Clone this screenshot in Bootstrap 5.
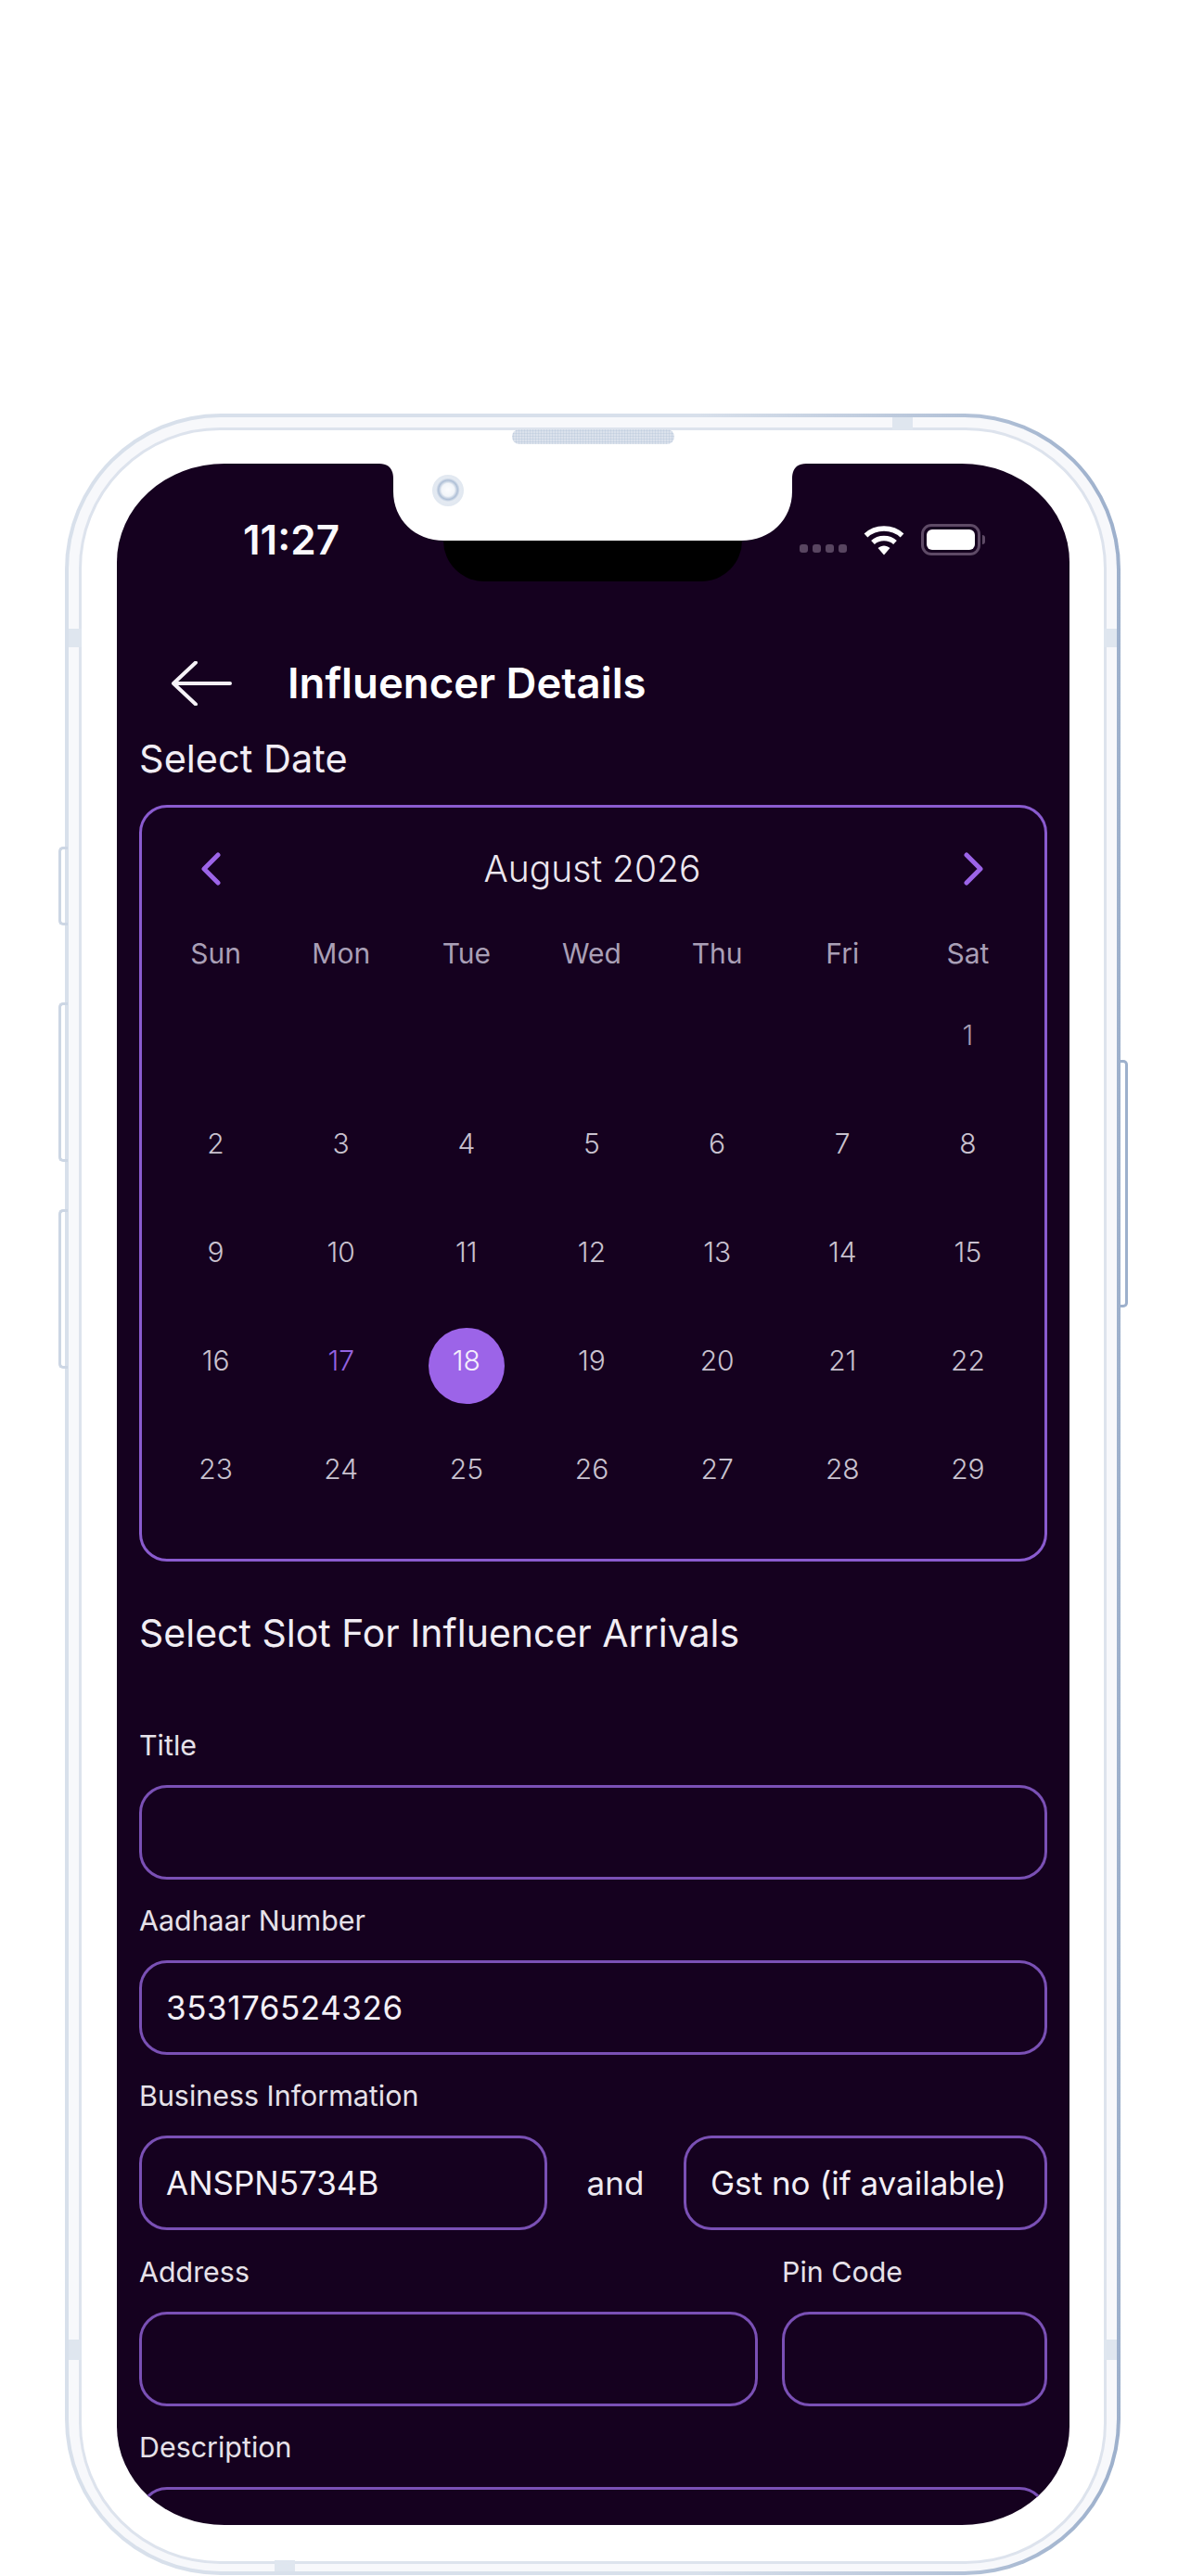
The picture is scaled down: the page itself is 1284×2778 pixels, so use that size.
<!DOCTYPE html>
<html lang="en">
<head>
<meta charset="utf-8">
<title>Influencer Details</title>
<link href="https://cdn.jsdelivr.net/npm/bootstrap@5.3.0/dist/css/bootstrap.min.css" rel="stylesheet">
<style>
html,body{background:#fff;height:2778px;overflow:hidden;font-family:"Inter","Liberation Sans",sans-serif}
.phone-wrap{position:relative;width:1138px;height:2331px;margin:446px 0 0 70px}
.shell-edge{height:100%;padding:4px;border-radius:168px;background:linear-gradient(to right,#d8e0eb 0,#d8e0eb 60%,#9db0cc 100%)}
.shell-band{height:100%;padding:11px 11px 8px;border-radius:164px;background:#f7f8fb}
.shell-ring{height:100%;padding:36px 37px 38px 38px;border:3px solid #dde3ed;border-radius:152px;background:#fff}
.app-screen{position:relative;height:2223px;padding:0 24px;overflow:hidden;background:#15011f;border-radius:116px/106px;color:#f3eff6}
.status-row{height:164px;padding:0 72px 0 112px}
.clock{font-size:44px;font-weight:600;color:#fbf9fc}
.sig-dot{width:9px;height:9px;border-radius:3px;background:#584560}
.sig-dots{margin-top:18px;margin-right:18px;gap:5px}
.batt{position:relative;width:64px;height:34px;padding:3px;border:3px solid #5e4a66;border-radius:11px;margin-left:18px}
.batt::before{content:"";display:block;height:100%;background:#fff;border-radius:6px}
.batt::after{content:"";position:absolute;right:-8px;top:9px;width:3px;height:10px;background:#5e4a66;border-radius:0 3px 3px 0}
.head-row{height:90px;margin-top:28px;padding-left:34px}
.head-title{font-size:45.500px;font-weight:600;margin:0 0 0 60px;color:#fff}
.sect-title{font-size:41px;font-weight:400;line-height:50px;margin:0;color:#f1edf4}
.date-title{margin-top:11px;font-size:41.5px}
.cal-box{margin-top:25px;height:816px;padding:36px 15px 0 12px;border:3px solid #8a5bcf;border-radius:30px}
.cal-nav{height:60px;padding:0 49px 0 50px}
.cal-month{font-size:39px;font-weight:300;color:#ece7ef}
.cal-week{margin-top:36px;height:50px;font-size:30px;font-weight:400;color:#a99fb6}
.cal-week .col,.cal-days .col{display:flex;align-items:center;justify-content:center}
.cal-days{margin-top:4.5px}
.cal-days .col{height:117px;font-size:30px;font-weight:300;color:#c9c2cf}
.cal-days .col span{display:flex;align-items:center;justify-content:center;width:82px;height:82px;margin-top:12px;padding-bottom:12px}
.day-muted{color:#a79eb2}
.cal-days .col .day-today{color:#9463e0}
.cal-days .col .day-picked{border-radius:50%;background:#9c64e8;color:#f5effc}
.slot-title{margin-top:51.5px}
.field-label{display:block;height:40px;margin:0;font-size:30.4px;line-height:40px;font-weight:400;color:#e6e1e9}
.field-first{margin-top:76px}
.field-next{margin-top:24.4px}
.form-control.field-box{height:102px;margin-top:23px;padding:0 26px;display:flex;align-items:center;background:transparent;border:3px solid #7a50b5;border-radius:30px;color:#f3eff6;font-size:35px;font-family:inherit}
.digits-wide{letter-spacing:.55px}
.biz-left{width:440px}
.biz-and{width:147px;margin-top:23px;font-size:35px;color:#ece8ef}
.biz-right{width:392px}
.pin-col{width:286px;margin-left:26px}
.side-key{position:absolute;width:10px;border:3px solid #ccd6e4;border-right:0;border-radius:5px 0 0 5px}
.key-a{left:-7px;top:467px;height:85px}
.key-b{left:-7px;top:635px;height:172px}
.key-c{left:-7px;top:858px;height:172px}
.key-d{left:1135px;top:697px;height:267px;width:11px;border:3px solid #9db0cc;border-left:0;border-radius:0 5px 5px 0}
.ant{position:absolute;background:#dfe6ef}
.ant-l1{left:4px;top:232px;width:14px;height:20px}
.ant-l2{left:4px;top:2077px;width:14px;height:22px}
.ant-r1{left:1120px;top:232px;width:14px;height:20px}
.ant-r2{left:1120px;top:2077px;width:14px;height:22px}
.ant-t{left:892px;top:4px;width:22px;height:14px}
.ant-b{left:226px;top:2315px;width:22px;height:12px}
.speaker{position:absolute;left:482px;top:17px;width:175px;height:16px;border-radius:8px;background:radial-gradient(circle,#c3cfe0 45%,#dbe2ec 50%) 0 0/3px 3px}
.cam{position:absolute;left:396px;top:66px;width:34px;height:34px;border-radius:50%;background:radial-gradient(circle at 50% 48%,#fbfcfe 0,#f2f5f9 28%,#aebfd6 42%,#e4eaf2 52%,#dfe6ef 80%,#f4f6fa 100%)}
.notch-dark{position:absolute;left:352px;top:83px;width:322px;height:44px;background:#000;border-radius:0 0 46px 46px}
.notch-cut{position:absolute;left:283px;top:0}
</style>
</head>
<body>
<div class="phone-wrap">
  <div class="shell-edge"><div class="shell-band"><div class="shell-ring">
    <div class="app-screen">
      <div class="status-row d-flex align-items-center justify-content-between">
        <span class="clock">11:27</span>
        <div class="d-flex align-items-center">
          <div class="d-flex sig-dots"><i class="sig-dot"></i><i class="sig-dot"></i><i class="sig-dot"></i><i class="sig-dot"></i></div>
          <svg width="44" height="33" viewBox="0 0 44 33" aria-hidden="true"><path d="M2.5 11.5C13 1.5 31 1.5 41.5 11.5" fill="none" stroke="#fff" stroke-width="5.5"/><path d="M10 19C16.5 13 27.5 13 34 19" fill="none" stroke="#fff" stroke-width="5.5"/><path d="M15.5 25C19.500 21.500 24.500 21.500 28.500 25L22 32.500Z" fill="#fff"/></svg>
          <div class="batt"></div>
        </div>
      </div>
      <div class="head-row d-flex align-items-center">
        <svg width="66" height="48" viewBox="0 0 66 48" aria-hidden="true"><path d="M64 24H3M27 1.500L3 24L27 46.500" fill="none" stroke="#f6f3f8" stroke-width="4" stroke-linecap="round" stroke-linejoin="round"/></svg>
        <h1 class="head-title">Influencer Details</h1>
      </div>
      <h2 class="sect-title date-title">Select Date</h2>
      <div class="cal-box">
        <div class="cal-nav d-flex align-items-center justify-content-between">
          <svg width="24" height="36" viewBox="0 0 24 36" aria-hidden="true"><path d="M20 3L5 18L20 33" fill="none" stroke="#9c64e8" stroke-width="5" stroke-linecap="round" stroke-linejoin="round"/></svg>
          <span class="cal-month">August 2026</span>
          <svg width="24" height="36" viewBox="0 0 24 36" aria-hidden="true"><path d="M4 3L19 18L4 33" fill="none" stroke="#9c64e8" stroke-width="5" stroke-linecap="round" stroke-linejoin="round"/></svg>
        </div>
        <div class="row g-0 cal-week"><div class="col">Sun</div><div class="col">Mon</div><div class="col">Tue</div><div class="col">Wed</div><div class="col">Thu</div><div class="col">Fri</div><div class="col">Sat</div></div>
        <div class="cal-days">
          <div class="row g-0"><div class="col"></div><div class="col"></div><div class="col"></div><div class="col"></div><div class="col"></div><div class="col"></div><div class="col"><span class="day-muted">1</span></div></div>
          <div class="row g-0"><div class="col"><span>2</span></div><div class="col"><span>3</span></div><div class="col"><span>4</span></div><div class="col"><span>5</span></div><div class="col"><span>6</span></div><div class="col"><span>7</span></div><div class="col"><span>8</span></div></div>
          <div class="row g-0"><div class="col"><span>9</span></div><div class="col"><span>10</span></div><div class="col"><span>11</span></div><div class="col"><span>12</span></div><div class="col"><span>13</span></div><div class="col"><span>14</span></div><div class="col"><span>15</span></div></div>
          <div class="row g-0"><div class="col"><span>16</span></div><div class="col"><span class="day-today">17</span></div><div class="col"><span class="day-picked">18</span></div><div class="col"><span>19</span></div><div class="col"><span>20</span></div><div class="col"><span>21</span></div><div class="col"><span>22</span></div></div>
          <div class="row g-0"><div class="col"><span>23</span></div><div class="col"><span>24</span></div><div class="col"><span>25</span></div><div class="col"><span>26</span></div><div class="col"><span>27</span></div><div class="col"><span>28</span></div><div class="col"><span>29</span></div></div>
        </div>
      </div>
      <h2 class="sect-title slot-title">Select Slot For Influencer Arrivals</h2>
      <form>
        <span class="field-label field-first">Title</span>
        <div class="form-control field-box"></div>
        <span class="field-label field-next">Aadhaar Number</span>
        <div class="form-control field-box digits-wide">353176524326</div>
        <span class="field-label field-next">Business Information</span>
        <div class="d-flex">
          <div class="form-control field-box biz-left flex-shrink-0">ANSPN5734B</div>
          <div class="biz-and d-flex align-items-center justify-content-center flex-shrink-0">and</div>
          <div class="form-control field-box biz-right flex-shrink-0">Gst no (if available)</div>
        </div>
        <div class="d-flex">
          <div class="flex-grow-1">
            <span class="field-label field-next">Address</span>
            <div class="form-control field-box"></div>
          </div>
          <div class="pin-col flex-shrink-0">
            <span class="field-label field-next">Pin Code</span>
            <div class="form-control field-box"></div>
          </div>
        </div>
        <span class="field-label field-next">Description</span>
        <div class="form-control field-box"></div>
      </form>
      <div class="notch-dark"></div>
      <svg class="notch-cut" width="460" height="84" viewBox="0 0 460 84" aria-hidden="true"><path d="M0 0C10 0 15 6 15 16V30C15 60 38 83 70 83H390C422 83 445 60 445 30V16C445 6 450 0 460 0Z" fill="#fff"/></svg>
    </div>
  </div></div></div>
  <i class="ant ant-l1"></i><i class="ant ant-l2"></i><i class="ant ant-r1"></i><i class="ant ant-r2"></i><i class="ant ant-t"></i><i class="ant ant-b"></i>
  <i class="speaker"></i><i class="cam"></i>
  <i class="side-key key-a"></i><i class="side-key key-b"></i><i class="side-key key-c"></i><i class="side-key key-d"></i>
</div>
<script src="https://cdn.jsdelivr.net/npm/bootstrap@5.3.0/dist/js/bootstrap.bundle.min.js"></script>
</body>
</html>
